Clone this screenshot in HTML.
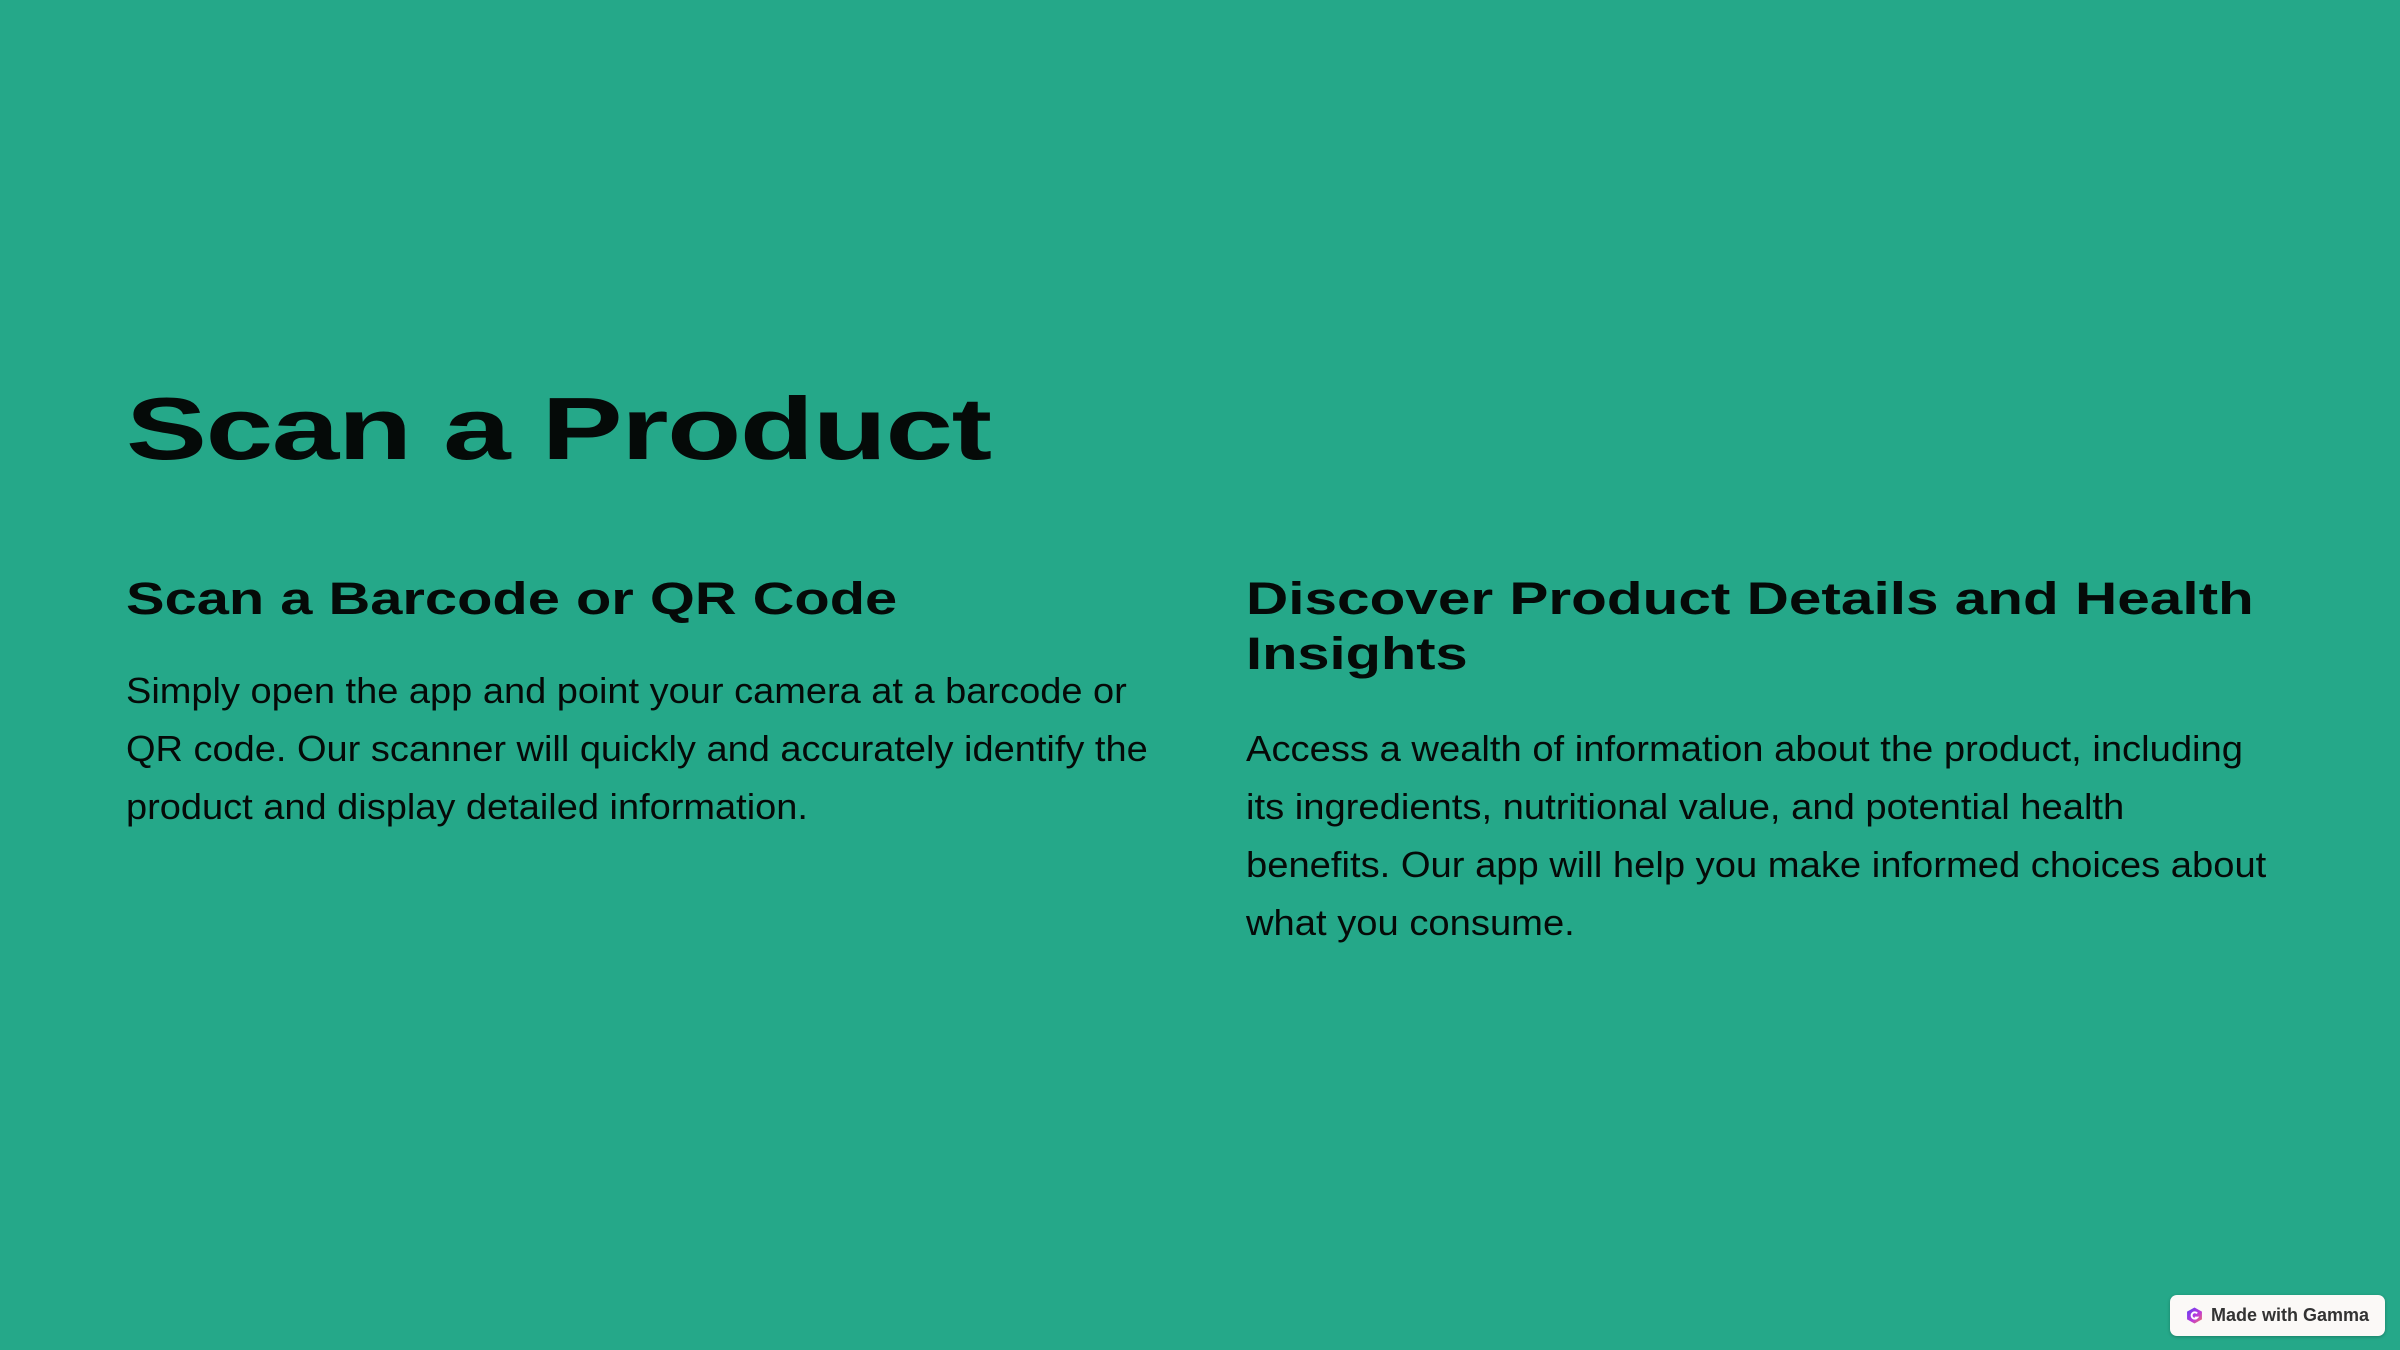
<!DOCTYPE html>
<html><head><meta charset="utf-8"><style>
html,body{margin:0;padding:0}
body{width:2400px;height:1350px;background:#25a889;position:relative;overflow:hidden;font-family:"Liberation Sans",sans-serif;color:#050a08}
.a{position:absolute;white-space:nowrap}
.h{font-weight:bold;display:inline-block;transform-origin:0 0}
.h1{left:126px;top:379px;font-size:88px;line-height:100px}
.h1 span{transform:scaleX(1.38);letter-spacing:-1px}
.h2{font-size:45px;line-height:55px;top:571px}
.h2 span{transform:scaleX(1.285)}
.p{font-size:36px;line-height:58px;transform-origin:0 0}
.badge{position:absolute;left:2170px;top:1295px;width:215px;height:41px;background:#fbf9f7;border-radius:7px;box-shadow:0 1px 3px rgba(0,0,0,.25);font-size:18px;font-weight:bold;color:#333;line-height:41px}
</style></head><body>
<div class="a h1"><span class="h">Scan a Product</span></div>
<div class="a h2" style="left:126px"><span class="h">Scan a Barcode or QR Code</span></div>
<div class="a h2" style="left:1246px"><span class="h" style="transform:scaleX(1.3)">Discover Product Details and Health</span><br><span class="h">Insights</span></div>
<div class="a p" style="left:126px;top:662px;transform:scaleX(1.055)">Simply open the app and point your camera at a barcode or<br>QR code. Our scanner will quickly and accurately identify the<br>product and display detailed information.</div>
<div class="a p" style="left:1246px;top:720px;transform:scaleX(1.06)">Access a wealth of information about the product, including<br>its ingredients, nutritional value, and potential health<br>benefits. Our app will help you make informed choices about<br>what you consume.</div>
<div class="badge"><svg style="position:absolute;left:16px;top:12px" width="17" height="17" viewBox="0 0 16 16"><defs><linearGradient id="g" x1="0" y1="0" x2="1" y2="1"><stop offset="0" stop-color="#5b3df5"/><stop offset=".6" stop-color="#c03ad8"/><stop offset="1" stop-color="#f27a54"/></linearGradient></defs><path d="M8 0.5L15 4.3V11.7L8 15.5L1 11.7V4.3Z" fill="url(#g)"/><path d="M10.5 6A3 3 0 1 0 10.5 10H8.3" stroke="#fff" stroke-width="1.8" fill="none"/></svg><span style="position:absolute;left:41px">Made with Gamma</span></div>
</body></html>
